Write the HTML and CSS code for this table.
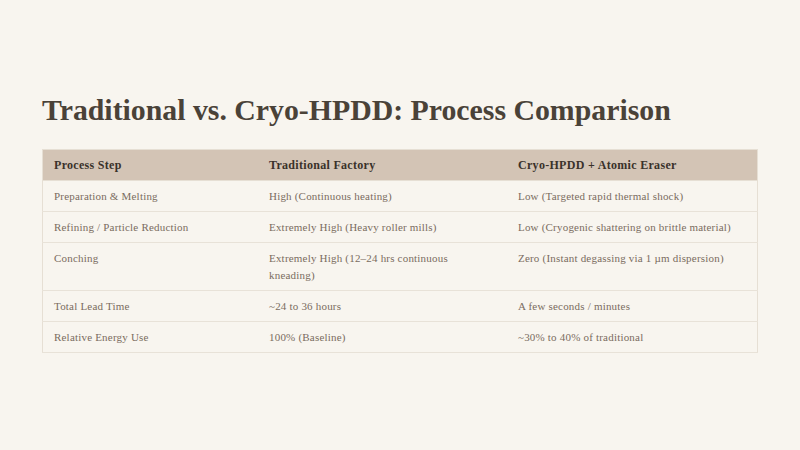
FILE: index.html
```html
<!DOCTYPE html>
<html lang="en">
<head>
<meta charset="utf-8">
<title>Process Comparison</title>
<link rel="stylesheet" href="styles.css">
</head>
<body>
<main class="slide">
  <h1 class="title">Traditional vs. Cryo-HPDD: Process Comparison</h1>
  <table class="compare">
    <thead>
      <tr>
        <th class="c1">Process Step</th>
        <th class="c2">Traditional Factory</th>
        <th class="c3">Cryo-HPDD + Atomic Eraser</th>
      </tr>
    </thead>
    <tbody>
      <tr>
        <td>Preparation &amp; Melting</td>
        <td>High (Continuous heating)</td>
        <td>Low (Targeted rapid thermal shock)</td>
      </tr>
      <tr>
        <td>Refining / Particle Reduction</td>
        <td>Extremely High (Heavy roller mills)</td>
        <td>Low (Cryogenic shattering on brittle material)</td>
      </tr>
      <tr>
        <td>Conching</td>
        <td>Extremely High (12–24 hrs continuous kneading)</td>
        <td>Zero (Instant degassing via 1 µm dispersion)</td>
      </tr>
      <tr>
        <td>Total Lead Time</td>
        <td>~24 to 36 hours</td>
        <td>A few seconds / minutes</td>
      </tr>
      <tr>
        <td>Relative Energy Use</td>
        <td>100% (Baseline)</td>
        <td>~30% to 40% of traditional</td>
      </tr>
    </tbody>
  </table>
</main>
</body>
</html>
```

FILE: styles.css
```css
html, body {
  margin: 0;
  padding: 0;
  background: #f8f5ef;
}
body {
  font-family: "Liberation Serif", "DejaVu Serif", serif;
  width: 800px;
  height: 450px;
  overflow: hidden;
}
.slide {
  padding: 92px 42px 0 42px;
}
.title {
  margin: 0 0 21px 0;
  font-size: 29.8px;
  line-height: 36px;
  font-weight: 700;
  color: #4a4238;
}
.compare {
  width: 716px;
  border-collapse: collapse;
  table-layout: fixed;
  border: 1px solid #e6dfd4;
  font-size: 11px;
  line-height: 17px;
}
.compare th {
  background: #d3c4b5;
  color: #3a322b;
  font-size: 12px;
  letter-spacing: 0.3px;
  font-weight: 700;
  text-align: left;
  padding: 7px 11px 6px 11px;
  border-bottom: 1px solid #e6dfd4;
}
.c1 { width: 193px; }
.c2 { width: 227px; }
.c3 { width: auto; }
.compare td {
  color: #7a6c60;
  letter-spacing: 0.2px;
  text-align: left;
  vertical-align: top;
  padding: 7px 11px 6px 11px;
  border-bottom: 1px solid #e8e2d8;
}
```
